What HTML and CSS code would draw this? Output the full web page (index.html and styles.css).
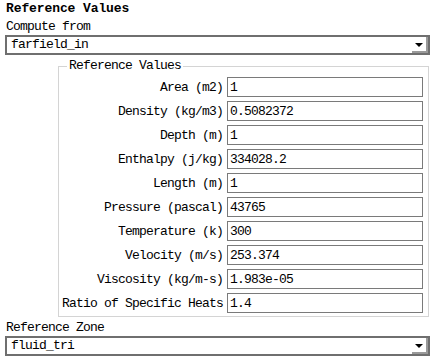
FILE: index.html
```html
<!DOCTYPE html>
<html lang="en">

<head>
    <meta charset="UTF-8">
    <title>Reference Values</title>
    <link rel="stylesheet" href="styles.css">
</head>

<body>
    <div class="panel">
        <div class="title">Reference Values</div>

        <div class="field-label">Compute from</div>
        <div class="dropdown">
            <span class="dropdown-text">farfield_in</span>
            <span class="dropdown-btn"><span class="arrow"></span></span>
        </div>

        <fieldset class="values">
            <legend>Reference Values</legend>
            <div class="grid">
                <label for="area">Area (m2)</label>
                <input type="text" id="area" value="1">

                <label for="density">Density (kg/m3)</label>
                <input type="text" id="density" value="0.5082372">

                <label for="depth">Depth (m)</label>
                <input type="text" id="depth" value="1">

                <label for="enthalpy">Enthalpy (j/kg)</label>
                <input type="text" id="enthalpy" value="334028.2">

                <label for="length">Length (m)</label>
                <input type="text" id="length" value="1">

                <label for="pressure">Pressure (pascal)</label>
                <input type="text" id="pressure" value="43765">

                <label for="temperature">Temperature (k)</label>
                <input type="text" id="temperature" value="300">

                <label for="velocity">Velocity (m/s)</label>
                <input type="text" id="velocity" value="253.374">

                <label for="viscosity">Viscosity (kg/m-s)</label>
                <input type="text" id="viscosity" value="1.983e-05">

                <label for="ratio">Ratio of Specific Heats</label>
                <input type="text" id="ratio" value="1.4">
            </div>
        </fieldset>

        <div class="field-label zone-label">Reference Zone</div>
        <div class="dropdown">
            <span class="dropdown-text">fluid_tri</span>
            <span class="dropdown-btn"><span class="arrow"></span></span>
        </div>
    </div>
</body>

</html>
```

FILE: styles.css
```css
body {
    margin: 0;
    padding: 0;
    background-color: #fff;
    font-family: 'Liberation Mono', 'DejaVu Sans Mono', monospace;
    font-size: 13px;
    letter-spacing: -0.8px;
    color: #000;
}

.panel {
    width: 434px;
}

.title {
    font-weight: bold;
    letter-spacing: -0.1px;
    line-height: 16px;
    padding-top: 1px;
    margin-left: 6px;
}

.field-label {
    line-height: 14px;
    margin: 3px 0 0 6px;
}

.zone-label {
    margin-top: 4px;
}

.dropdown {
    display: flex;
    align-items: center;
    height: 20px;
    box-sizing: border-box;
    margin: 1px 4px 0 5px;
    border: 2px solid #6f6f6f;
}

.dropdown-text {
    flex: 1;
    padding-left: 4px;
    line-height: 16px;
}

.dropdown-btn {
    display: flex;
    align-items: center;
    justify-content: center;
    width: 16px;
    height: 16px;
    box-sizing: border-box;
    border-right: 2px solid #9a9a9a;
    border-bottom: 2px solid #9a9a9a;
}

.arrow {
    width: 0;
    height: 0;
    border-left: 4px solid transparent;
    border-right: 4px solid transparent;
    border-top: 4px solid #000;
    margin-top: 1px;
}

.values {
    margin: 4px 5px 0 58px;
    padding: 4px 5px 3px 3px;
    border: 1px solid #d4d4d4;
}

.values legend {
    margin-left: 5px;
    padding: 0 2px;
    line-height: 14px;
}

.grid {
    display: grid;
    grid-template-columns: auto 1fr;
    column-gap: 4px;
    row-gap: 4px;
    align-items: center;
}

.grid label {
    text-align: right;
    white-space: nowrap;
}

.grid input {
    height: 20px;
    box-sizing: border-box;
    margin: 0;
    padding: 0 2px;
    border: 1px solid #7a7a7a;
    font-family: inherit;
    font-size: 13px;
    letter-spacing: -0.8px;
    color: #000;
    outline: none;
}
```
